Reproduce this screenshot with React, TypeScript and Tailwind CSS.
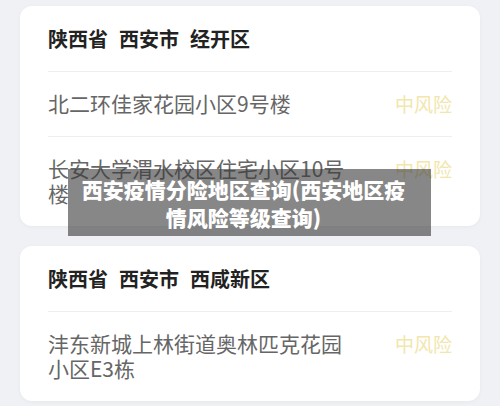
import React from "react";

type Place = { name: string; level: string };
type Area = { region: string[]; places: Place[] };

const areas: Area[] = [
  {
    region: ["陕西省", "西安市", "经开区"],
    places: [
      { name: "北二环佳家花园小区9号楼", level: "中风险" },
      { name: "长安大学渭水校区住宅小区10号楼", level: "中风险" },
    ],
  },
  {
    region: ["陕西省", "西安市", "西咸新区"],
    places: [{ name: "沣东新城上林街道奥林匹克花园小区E3栋", level: "中风险" }],
  },
];

function AreaCard({ area }: { area: Area }) {
  return (
    <div className="rounded-[12px] bg-white shadow-[0_1px_4px_rgba(0,0,0,0.04)]">
      <div className="flex h-[65px] items-center gap-[11px] px-7 text-[20px] font-bold leading-[25px] text-[#222]">
        {area.region.map((r, i) => (
          <span key={i}>{r}</span>
        ))}
      </div>
      {area.places.map((p, i) => (
        <div key={i} className="mx-7 flex items-start justify-between border-t border-[#eeeeee] pb-5 pt-[19px]">
          <div className="w-[305px] text-[21px] leading-[25px] text-[#666]">{p.name}</div>
          <div className="text-[19px] leading-[25px] text-[#f2e6ad]">{p.level}</div>
        </div>
      ))}
    </div>
  );
}

export default function App() {
  return (
    <div
      className="relative h-[406px] w-[500px] overflow-hidden bg-[#eff1f5] px-5 pt-[6px]"
      style={{ fontFamily: '"Noto Sans CJK SC", "Noto Sans", sans-serif' }}
    >
      <div className="flex flex-col gap-5">
        {areas.map((a, i) => (
          <AreaCard key={i} area={a} />
        ))}
      </div>
      <div className="absolute left-[68px] top-[169px] flex h-[67px] w-[363px] items-center justify-center bg-[rgba(55,55,55,0.6)] pr-[12px] text-center text-[21px] font-black leading-[28px] text-white">
        <span>
          西安疫情分险地区查询(西安地区疫
          <br />
          情风险等级查询)
        </span>
      </div>
    </div>
  );
}
